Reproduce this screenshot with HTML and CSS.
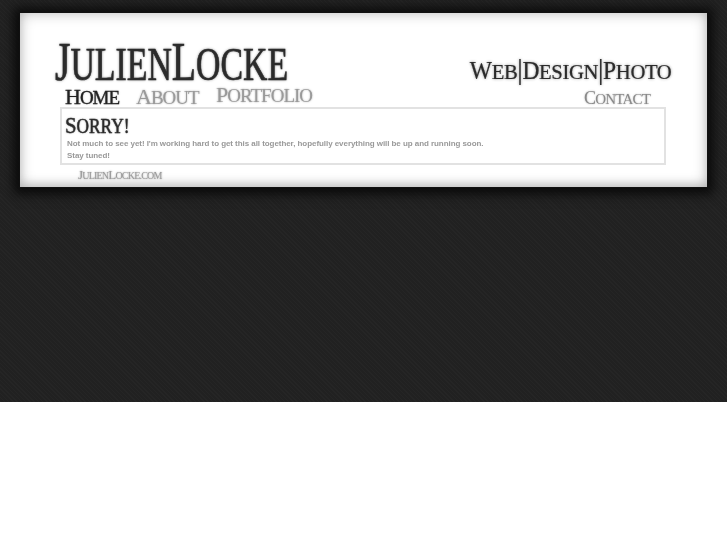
FILE: index.html
```html
<!DOCTYPE html>
<html lang="en">
<head>
<meta charset="utf-8">
<title>JulienLocke</title>
<link rel="stylesheet" href="styles.css">
</head>
<body>
<div class="stage">
  <main class="panel">
    <header class="head">
      <div class="brand">
        <h1 class="logo"><span class="cap">J</span>ULIEN<span class="cap">L</span>OCKE</h1>
        <nav class="nav">
          <a class="nav-link home"><span class="ncap">H</span>OME</a>
          <a class="nav-link about"><span class="ncap">A</span>BOUT</a>
          <a class="nav-link portfolio"><span class="ncap">P</span>ORTFOLIO</a>
        </nav>
      </div>
      <div class="side">
        <div class="tagline"><span class="tcap">W</span>EB<span class="bar">|</span><span class="tcap">D</span>ESIGN<span class="bar">|</span><span class="tcap">P</span>HOTO</div>
        <a class="contact"><span class="ccap">C</span>ONTACT</a>
      </div>
    </header>
    <section class="box">
      <h2 class="sorry"><span class="scap">S</span>ORRY!</h2>
      <p class="msg">Not much to see yet! I'm working hard to get this all together, hopefully everything will be up and running soon.<br>Stay tuned!</p>
    </section>
    <footer class="foot"><span class="fcap">J</span>ULIEN<span class="fcap">L</span>OCKE.COM</footer>
  </main>
</div>
</body>
</html>
```
FILE: styles.css
```css
html, body { margin: 0; padding: 0; background: #fff; }
body { font-family: "Liberation Serif", serif; }
.stage {
  height: 402px;
  box-sizing: border-box;
  padding: 13px 20px 0;
  background-color: #232323;
  background-image: repeating-linear-gradient(45deg, #252525 0 1px, #212121 1px 3px);
}
.panel {
  width: 687px;
  height: 174px;
  box-sizing: border-box;
  padding: 0 41px 0 40px;
  background: #fff;
  box-shadow: inset 0 0 14px rgba(0,0,0,.26), inset 0 -4px 8px rgba(0,0,0,.1), 0 0 0 1px #111, 0 1px 10px 6px #0a0a0a;
}
.head { display: flex; justify-content: space-between; height: 94px; }
.brand { padding-top: 24px; margin-left: -5px; }
.logo {
  margin: 0;
  height: 54px;
  width: 232px;
  font-size: 46px;
  line-height: 50px;
  font-weight: 400;
  color: #2b2b2b;
  white-space: nowrap;
  transform: scaleX(.735);
  transform-origin: 0 50%;
  text-shadow: 0 0 3px rgba(0,0,0,.55);
  -webkit-text-stroke: .6px #2b2b2b;
  filter: blur(.4px);
}
.cap { font-size: 54px; }
.nav { display: flex; margin: -5px 0 0 10px; font-size: 19px; line-height: 22px; letter-spacing: -1px; filter: blur(.4px); }
.ncap { font-size: 22px; }
.nav-link { color: #9a9a9a; white-space: nowrap; text-shadow: 0 0 2px rgba(0,0,0,.35); }
.home { color: #222; width: 71px; -webkit-text-stroke: .3px #222; }
.about { width: 80px; }
.portfolio { margin-top: -2px; }
.side { display: flex; flex-direction: column; align-items: flex-end; padding-top: 45px; margin-right: -5px; }
.tagline {
  font-size: 22px; line-height: 26px; color: #2b2b2b; white-space: nowrap; letter-spacing: -.4px;
  transform: scaleX(.94);
  transform-origin: 100% 50%;
  text-shadow: 0 0 3px rgba(0,0,0,.45);
  -webkit-text-stroke: .2px #2b2b2b;
  filter: blur(.4px);
}
.tcap { font-size: 25px; }
.bar { font-size: 29px; line-height: 0; }
.contact {
  margin: 4px 21px 0 0; font-size: 15px; line-height: 18px; letter-spacing: -.8px; color: #8a8a8a; white-space: nowrap;
  text-shadow: 0 0 2px rgba(0,0,0,.3);
  filter: blur(.3px);
}
.ccap { font-size: 18px; }
.box {
  height: 58px;
  box-sizing: border-box;
  padding: 3px 3px 0;
  border: 2px solid #e2e2e2;
}
.sorry {
  margin: 0;
  height: 24px;
  font-size: 20px;
  line-height: 26px;
  font-weight: 400;
  color: #2b2b2b;
  transform: scaleX(.865);
  transform-origin: 0 50%;
  -webkit-text-stroke: .4px #2b2b2b;
  text-shadow: 0 0 2px rgba(0,0,0,.5);
  filter: blur(.3px);
}
.scap { font-size: 24px; }
.msg {
  margin: 2px 0 0 2px;
  font-family: "Liberation Sans", sans-serif;
  font-size: 8px;
  line-height: 12px;
  font-weight: 700;
  letter-spacing: -.06px;
  color: #999;
  white-space: nowrap;
  filter: blur(.25px);
}
.foot {
  margin: 2px 0 0 18px;
  font-size: 10px;
  line-height: 16px;
  letter-spacing: -.8px;
  color: #9a9a9a;
  text-shadow: 0 0 2px rgba(0,0,0,.35);
  filter: blur(.3px);
}
.fcap { font-size: 13px; }
```
